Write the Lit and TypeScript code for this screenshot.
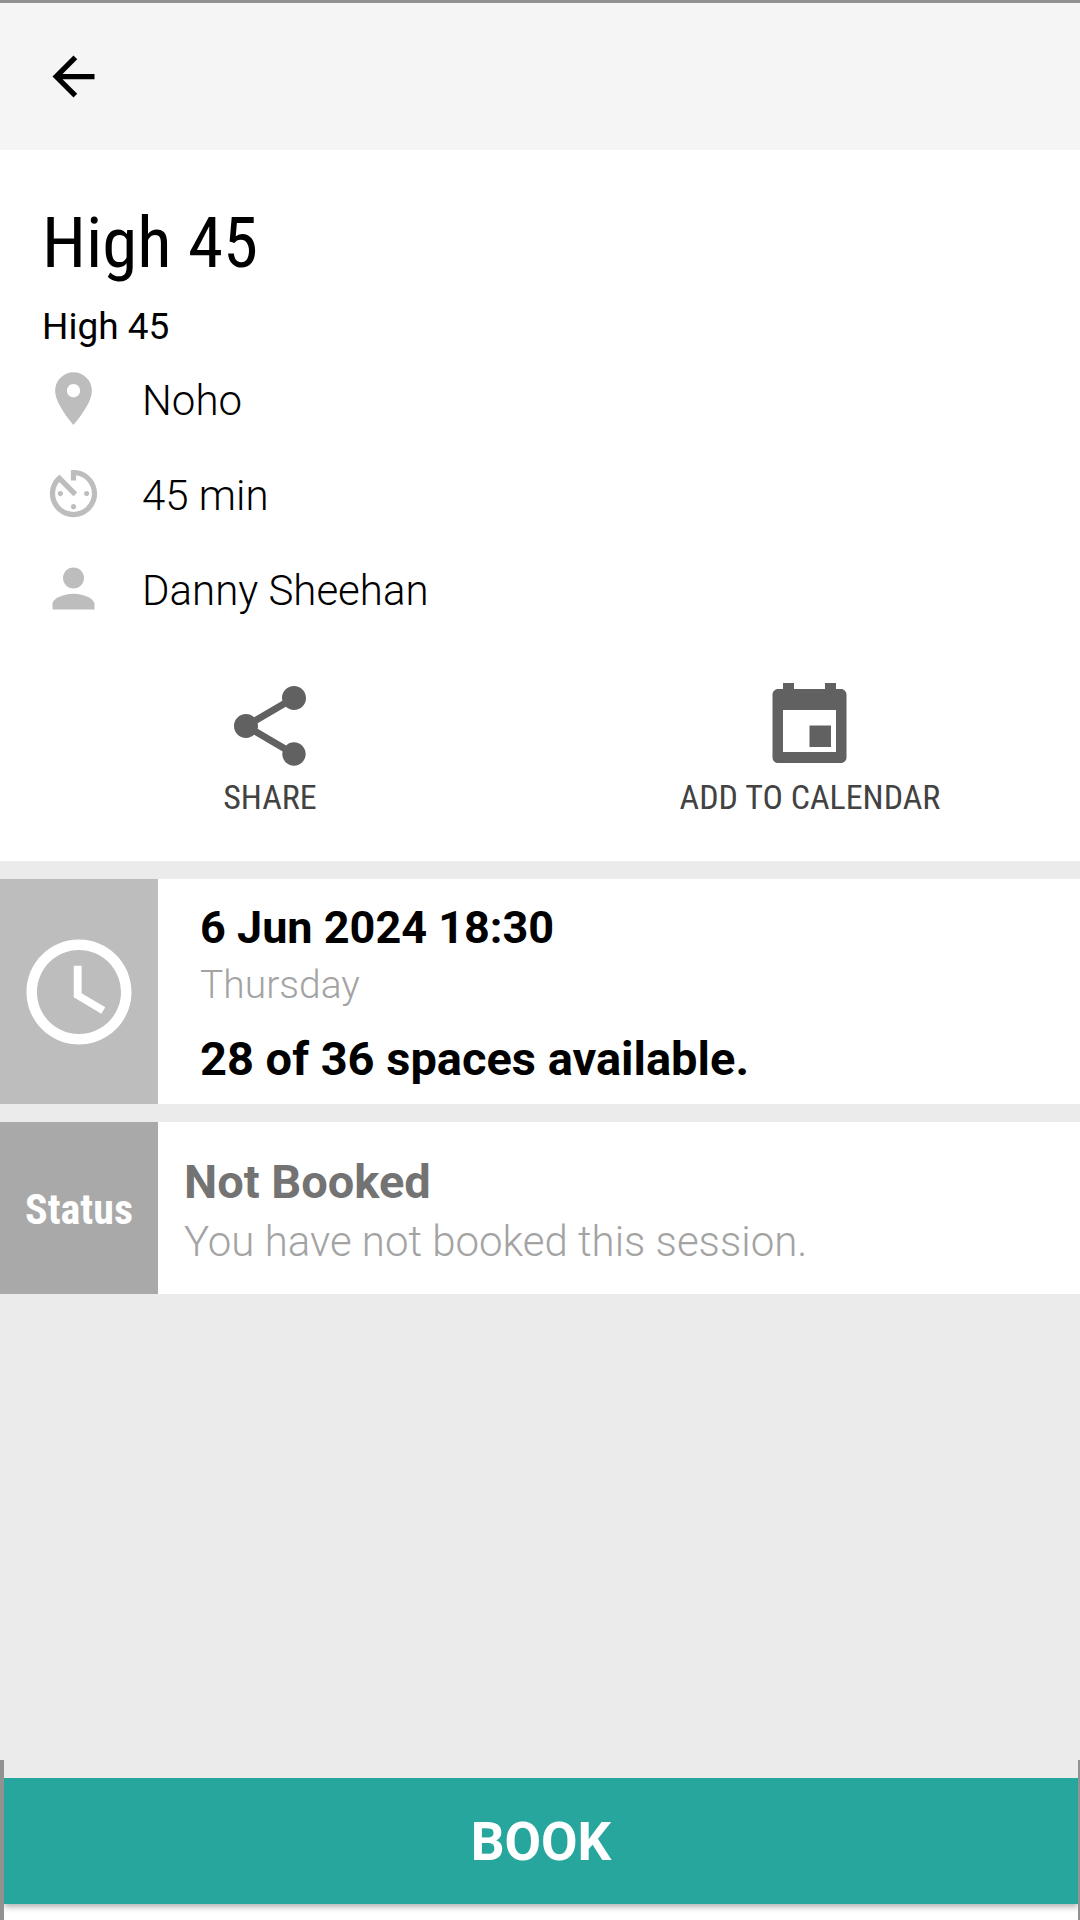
import { LitElement, html, css, svg } from "lit";
import { customElement, property } from "lit/decorators.js";

const PIN = svg`<path d="M12 2C8.13 2 5 5.13 5 9c0 5.25 7 13 7 13s7-7.75 7-13c0-3.87-3.13-7-7-7zm0 9.5c-1.38 0-2.5-1.12-2.5-2.5s1.12-2.5 2.5-2.5 2.5 1.12 2.5 2.5-1.12 2.5-2.5 2.5z"/>`;
const TIMER = svg`<path d="M11 17c0 .55.45 1 1 1s1-.45 1-1-.45-1-1-1-1 .45-1 1zm0-14v4h2V5.08c3.39.49 6 3.39 6 6.92 0 3.87-3.13 7-7 7s-7-3.13-7-7c0-1.68.59-3.22 1.58-4.42L12 13l1.41-1.41-6.8-6.8v.02C4.42 6.45 3 9.05 3 12c0 4.97 4.02 9 9 9 4.97 0 9-4.03 9-9s-4.03-9-9-9h-1zm7 9c0-.55-.45-1-1-1s-1 .45-1 1 .45 1 1 1 1-.45 1-1zM6 12c0 .55.45 1 1 1s1-.45 1-1-.45-1-1-1-1 .45-1 1z"/>`;
const PERSON = svg`<path d="M12 12c2.21 0 4-1.79 4-4s-1.79-4-4-4-4 1.79-4 4 1.79 4 4 4zm0 2c-2.67 0-8 1.34-8 4v2h16v-2c0-2.66-5.33-4-8-4z"/>`;

@customElement("app-root")
export class AppRoot extends LitElement {
  @property() name = "High 45";

  private details = [
    { icon: PIN, text: "Noho" },
    { icon: TIMER, text: "45 min" },
    { icon: PERSON, text: "Danny Sheehan" },
  ];

  static styles = css`
    :host {
      display: flex;
      flex-direction: column;
      min-height: 100vh;
      box-sizing: border-box;
      border-top: 3px solid #919191;
      background: #ebebeb;
      color: #000;
      font-family: Roboto, "Liberation Sans", sans-serif;
    }
    h1, h2, p, ul { margin: 0; padding: 0; }
    svg { display: block; fill: currentColor; flex: none; }
    button {
      margin: 0;
      padding: 0;
      border: 0;
      background: none;
      color: inherit;
      font: inherit;
      cursor: pointer;
    }
    .bar { display: flex; padding: 42px; background: #f5f5f5; }
    .icon { width: 63px; height: 63px; }
    .intro { background: #fff; padding: 51px 0 44px; }
    .name {
      padding: 0 42px;
      font: 400 71px/84px "Roboto Condensed", Roboto, sans-serif;
    }
    .kind { padding: 20px 42px 18px; font-size: 37px; line-height: 44px; }
    .details {
      display: flex;
      flex-direction: column;
      gap: 27px;
      padding: 0 42px;
      list-style: none;
    }
    .detail { display: flex; align-items: flex-start; gap: 37px; }
    .detail .icon { color: #bdbdbd; }
    .detail span { font-size: 42px; font-weight: 300; line-height: 68px; }
    .actions {
      display: grid;
      grid-template-columns: 1fr 1fr;
      padding-top: 53px;
    }
    .action {
      display: flex;
      flex-direction: column;
      align-items: center;
      gap: 3px;
      color: #424242;
      font: 400 34px/40px "Roboto Condensed", Roboto, sans-serif;
    }
    .action svg { width: 96px; height: 96px; color: #616161; }
    .card { display: flex; margin-top: 18px; background: #fff; }
    .side {
      display: flex;
      align-items: center;
      justify-content: center;
      flex: none;
      width: 158px;
      color: #fff;
    }
    .side.when { background: #bdbdbd; }
    .side.when svg { width: 126px; height: 126px; }
    .side.status {
      box-sizing: border-box;
      padding-top: 4px;
      background: #a9a9a9;
      font: 700 42px/50px "Roboto Condensed", Roboto, sans-serif;
    }
    .body { flex: 1; }
    .body.when { padding: 21px 42px 17px; }
    .body.status { padding: 32px 26px 27px; }
    .date { font-size: 45px; font-weight: 700; line-height: 56px; }
    .day {
      padding: 4px 0 21px;
      color: #a3a3a3;
      font-size: 39px;
      font-weight: 300;
      line-height: 50px;
    }
    .spaces, .state { font-size: 47px; font-weight: 700; line-height: 56px; }
    .state { color: #737373; }
    .note {
      padding-top: 7px;
      color: #a3a3a3;
      font-size: 42px;
      font-weight: 300;
      line-height: 50px;
    }
    .foot {
      margin-top: auto;
      padding: 18px 0 16px;
      border: solid #919191;
      border-width: 0 2px 0 4px;
      background: linear-gradient(#ebebeb 50%, #fff 50%);
    }
    .book {
      display: block;
      width: 100%;
      padding: 32px 0 30px;
      background: #26a69d;
      box-shadow: 0 3px 6px rgba(0, 0, 0, 0.3);
      clip-path: inset(0 0 -16px 0);
      color: #fff;
      font-size: 53px;
      font-weight: 700;
      line-height: 64px;
    }
  `;

  render() {
    return html`
      <header class="bar">
        <button aria-label="Back">
          <svg class="icon" viewBox="0 0 24 24"><path d="M20 11H7.83l5.59-5.59L12 4l-8 8 8 8 1.41-1.41L7.83 13H20v-2z"/></svg>
        </button>
      </header>

      <section class="intro">
        <h1 class="name">${this.name}</h1>
        <p class="kind">${this.name}</p>
        <ul class="details">
          ${this.details.map((d) => html`
            <li class="detail">
              <svg class="icon" viewBox="0 0 24 24" aria-hidden="true">${d.icon}</svg>
              <span>${d.text}</span>
            </li>`)}
        </ul>
        <div class="actions">
          <button class="action">
            <svg viewBox="0 0 24 24" aria-hidden="true"><path d="M18 16.08c-.76 0-1.44.3-1.96.77L8.91 12.7c.05-.23.09-.46.09-.7s-.04-.47-.09-.7l7.05-4.11c.54.5 1.25.81 2.04.81 1.66 0 3-1.34 3-3s-1.34-3-3-3-3 1.34-3 3c0 .24.04.47.09.7L8.04 9.81C7.5 9.31 6.79 9 6 9c-1.66 0-3 1.34-3 3s1.34 3 3 3c.79 0 1.5-.31 2.04-.81l7.12 4.16c-.05.21-.08.43-.08.65 0 1.61 1.31 2.92 2.92 2.92s2.92-1.31 2.92-2.92-1.31-2.92-2.92-2.92z"/></svg>
            SHARE
          </button>
          <button class="action">
            <svg viewBox="0 0 96 96" aria-hidden="true"><path fill-rule="evenodd" d="M21 5h11v6h31V5h11v6h5c3 0 5.500 2.500 5.500 5.500v63c0 3-2.500 5.500-5.500 5.500H16c-3 0-5.500-2.500-5.500-5.500v-63c0-3 2.500-5.500 5.500-5.500h5zM21 32v42h53V32zM47.500 47.500H69V69H47.500z"/></svg>
            ADD TO CALENDAR
          </button>
        </div>
      </section>

      <section class="card">
        <div class="side when">
          <svg viewBox="0 0 24 24" aria-hidden="true"><path d="M11.990 2C6.470 2 2 6.480 2 12s4.470 10 9.990 10C17.520 22 22 17.520 22 12S17.520 2 11.990 2zM12 20c-4.420 0-8-3.580-8-8s3.580-8 8-8 8 3.580 8 8-3.580 8-8 8zM12.500 7H11v6l5.250 3.150.75-1.230-4.500-2.670z"/></svg>
        </div>
        <div class="body when">
          <h2 class="date">6 Jun 2024 18:30</h2>
          <p class="day">Thursday</p>
          <p class="spaces">28 of 36 spaces available.</p>
        </div>
      </section>

      <section class="card">
        <div class="side status">Status</div>
        <div class="body status">
          <h2 class="state">Not Booked</h2>
          <p class="note">You have not booked this session.</p>
        </div>
      </section>

      <footer class="foot">
        <button class="book">BOOK</button>
      </footer>
    `;
  }
}
